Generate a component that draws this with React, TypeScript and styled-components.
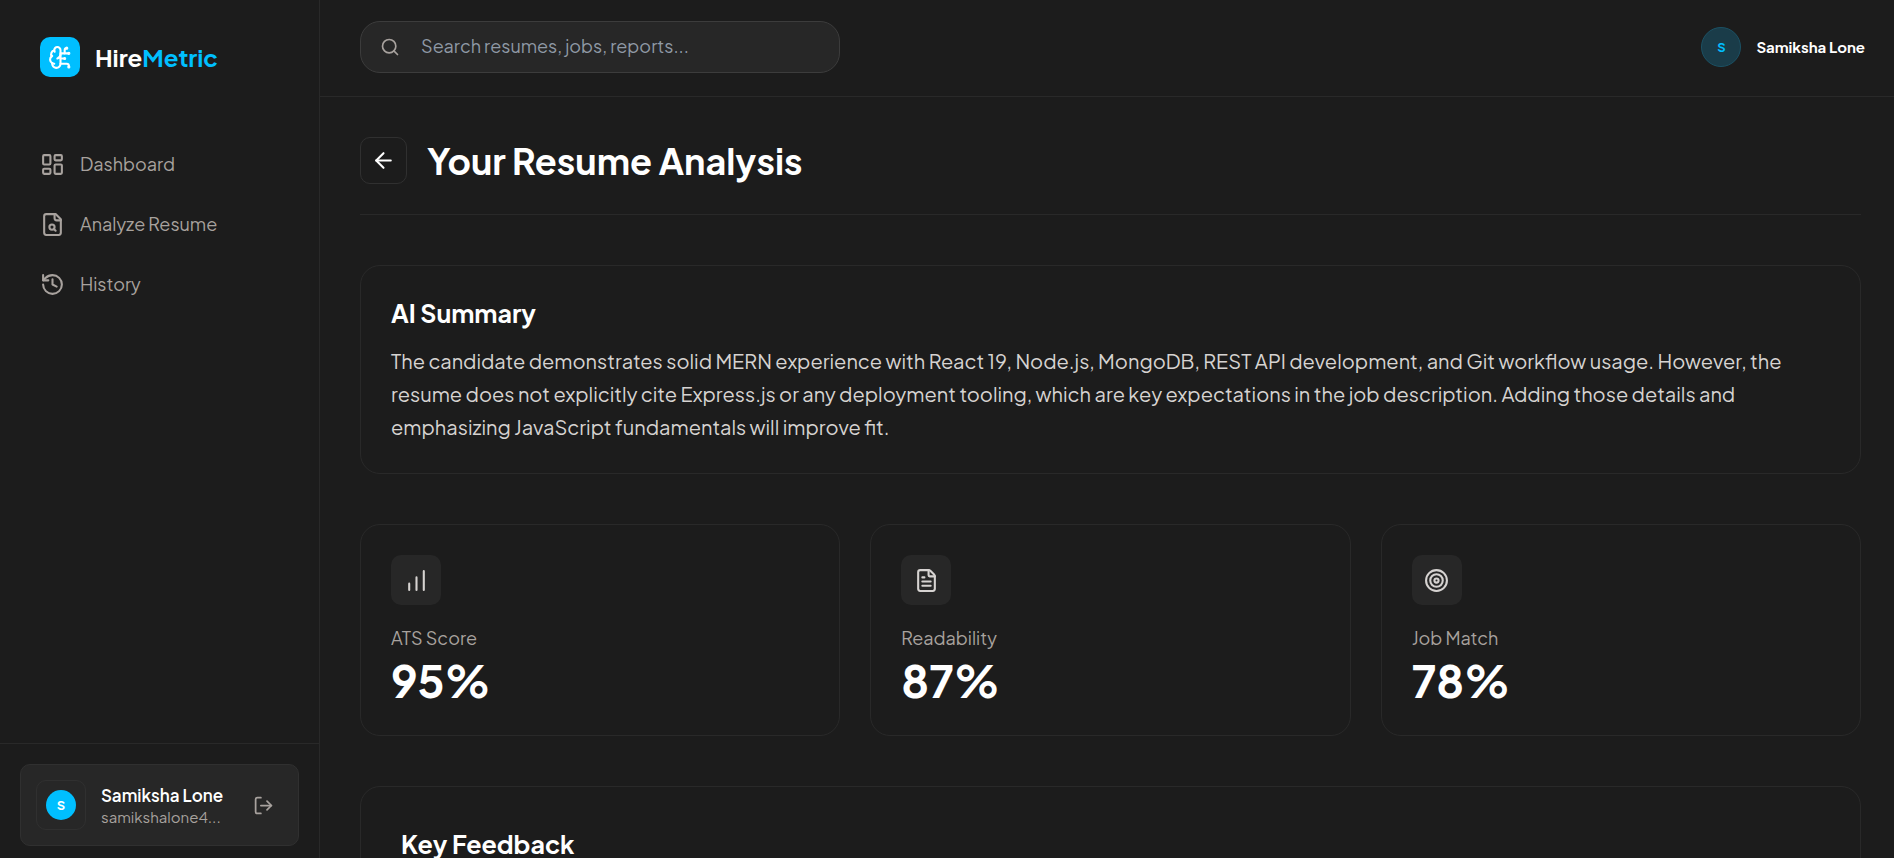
import React from "react";
import styled, { createGlobalStyle } from "styled-components";
import {
  ArrowLeft,
  BrainCircuit,
  FileText,
  History,
  LayoutDashboard,
  LogOut,
  Search,
  Target,
} from "lucide-react";

const color = {
  page: "#1c1c1c",
  raised: "#272727",
  line: "#292929",
  lineStrong: "#3c3c3c",
  accent: "#00bfff",
  white: "#ffffff",
  body: "#d6d3d1",
  muted: "#a8a29e",
};

const GlobalStyle = createGlobalStyle`
  *, *::before, *::after { box-sizing: border-box; }
  body {
    margin: 0;
    background: ${color.page};
    color: ${color.white};
    font-family: "Plus Jakarta Sans", Inter, "Liberation Sans", sans-serif;
    font-size: 16px;
  }
  h1, h2, p { margin: 0; }
  button, input { font: inherit; color: inherit; }
`;

const Shell = styled.div`
  display: grid;
  grid-template-columns: 320px minmax(0, 1fr);
  height: 100vh;
  overflow: hidden;
`;

const Sidebar = styled.aside`
  display: flex;
  flex-direction: column;
  border-right: 1px solid ${color.line};
`;

const Brand = styled.a`
  display: flex;
  align-items: center;
  gap: 15px;
  padding: 37px 40px 0;
  color: ${color.white};
  text-decoration: none;
  font-size: 24px;
  line-height: 40px;
  font-weight: 700;
`;

const BrandMark = styled.span`
  display: grid;
  place-items: center;
  width: 40px;
  height: 40px;
  border-radius: 10px;
  background: ${color.accent};
`;

const BrandAccent = styled.span`
  color: ${color.accent};
`;

const Nav = styled.nav`
  display: flex;
  flex-direction: column;
  gap: 10px;
  flex: 1;
  padding: 62px 20px 0;
`;

const NavLink = styled.a`
  display: flex;
  align-items: center;
  gap: 15px;
  height: 50px;
  padding: 0 20px;
  color: ${color.muted};
  text-decoration: none;
  font-size: 18px;
  line-height: 26px;
  font-weight: 400;
`;

const SidebarFooter = styled.div`
  padding: 20px 20px 12px;
  border-top: 1px solid ${color.line};
`;

const UserCard = styled.div`
  display: flex;
  align-items: center;
  gap: 15px;
  padding: 15px;
  border: 1px solid #303030;
  border-radius: 10px;
  background: ${color.raised};
`;

const UserBadge = styled.div`
  display: grid;
  place-items: center;
  flex: none;
  width: 50px;
  height: 50px;
  border: 1px solid #303030;
  border-radius: 10px;
`;

const Avatar = styled.span<{ $size: number; $soft?: boolean }>`
  display: grid;
  place-items: center;
  flex: none;
  width: ${(p) => p.$size}px;
  height: ${(p) => p.$size}px;
  border-radius: 50%;
  border: ${(p) => (p.$soft ? "1px solid #1b5164" : "0")};
  background: ${(p) => (p.$soft ? "#1a3c49" : color.accent)};
  color: ${(p) => (p.$soft ? color.accent : color.white)};
  font-size: 13px;
  line-height: 16px;
  font-weight: 700;
`;

const UserText = styled.div`
  flex: 1;
  min-width: 0;
`;

const UserName = styled.p`
  font-size: 17px;
  line-height: 24px;
  font-weight: 600;
  white-space: nowrap;
`;

const UserEmail = styled.p`
  font-size: 15px;
  line-height: 20px;
  color: ${color.muted};
`;

const LogoutButton = styled.button`
  display: grid;
  place-items: center;
  width: 40px;
  height: 40px;
  padding: 0;
  border: 0;
  background: none;
  color: ${color.muted};
  cursor: pointer;
`;

const Main = styled.div`
  display: flex;
  flex-direction: column;
  min-height: 0;
`;

const TopBar = styled.header`
  display: flex;
  align-items: center;
  justify-content: space-between;
  flex: none;
  padding: 21px 29px 23px 40px;
  border-bottom: 1px solid ${color.line};
`;

const SearchBox = styled.label`
  display: flex;
  align-items: center;
  gap: 21px;
  width: 480px;
  height: 52px;
  padding: 0 19px;
  border: 1px solid ${color.lineStrong};
  border-radius: 20px;
  background: ${color.raised};
  color: ${color.muted};
`;

const SearchInput = styled.input`
  flex: 1;
  min-width: 0;
  padding: 0 0 2px;
  border: 0;
  outline: 0;
  background: none;
  color: ${color.white};
  font-size: 18px;
  line-height: 26px;

  &::placeholder {
    color: #8f99a5;
    opacity: 1;
  }
`;

const Account = styled.div`
  display: flex;
  align-items: center;
  gap: 15px;
  font-size: 15px;
  line-height: 20px;
  font-weight: 700;
`;

const Content = styled.main`
  display: flex;
  flex-direction: column;
  flex: 1;
  gap: 50px;
  min-height: 0;
  padding: 40px 33px 40px 40px;
  overflow-y: auto;
  scrollbar-width: none;
`;

const PageHead = styled.div`
  display: flex;
  align-items: center;
  flex: none;
  gap: 20px;
  padding-bottom: 30px;
  border-bottom: 1px solid ${color.line};
`;

const BackButton = styled.button`
  display: grid;
  place-items: center;
  width: 47px;
  height: 47px;
  padding: 0;
  border: 1px solid #303030;
  border-radius: 10px;
  background: none;
  color: ${color.white};
  cursor: pointer;
`;

const PageTitle = styled.h1`
  font-size: 36px;
  line-height: 47px;
  font-weight: 700;
`;

const Card = styled.section<{ $pad: number }>`
  flex: none;
  padding: ${(p) => p.$pad}px;
  border: 1px solid ${color.line};
  border-radius: 20px;
`;

const CardTitle = styled.h2`
  font-size: 25px;
  line-height: 34px;
  font-weight: 700;
`;

const SummaryText = styled.p`
  margin-top: 14px;
  color: ${color.body};
  font-size: 20px;
  line-height: 33px;
`;

const Metrics = styled.div`
  display: grid;
  flex: none;
  grid-template-columns: repeat(3, minmax(0, 1fr));
  gap: 30px;
`;

const MetricIcon = styled.div`
  display: grid;
  place-items: center;
  width: 50px;
  height: 50px;
  border-radius: 10px;
  background: ${color.raised};
  color: ${color.body};
`;

const MetricLabel = styled.p`
  margin-top: 20px;
  color: ${color.muted};
  font-size: 18px;
  line-height: 25px;
`;

const MetricValue = styled.p`
  margin-top: 5px;
  font-size: 44px;
  line-height: 50px;
  font-weight: 700;
`;

const FileSearchIcon = () => (
  <svg width="25" height="25" viewBox="0 0 24 24" fill="none" stroke="currentColor" strokeWidth="2" strokeLinecap="round" strokeLinejoin="round" aria-hidden="true">
    <path d="M15 2H6a2 2 0 0 0-2 2v16a2 2 0 0 0 2 2h12a2 2 0 0 0 2-2V7Z" />
    <path d="M14 2v4a2 2 0 0 0 2 2h4" />
    <circle cx="11.5" cy="14.5" r="2.5" />
    <path d="M13.3 16.3 15 18" />
  </svg>
);

const BarsIcon = () => (
  <svg width="25" height="25" viewBox="0 0 24 24" fill="none" stroke="currentColor" strokeWidth="2" strokeLinecap="round" aria-hidden="true">
    <path d="M5 21v-6M12 21V9M19 21V3" />
  </svg>
);

const metrics = [
  { label: "ATS Score", value: "95%", icon: <BarsIcon /> },
  { label: "Readability", value: "87%", icon: <FileText size={25} /> },
  { label: "Job Match", value: "78%", icon: <Target size={25} /> },
];

export default function App() {
  return (
    <>
      <GlobalStyle />
      <Shell>
        <Sidebar>
          <Brand href="#">
            <BrandMark>
              <BrainCircuit size={25} />
            </BrandMark>
            <span>
              Hire<BrandAccent>Metric</BrandAccent>
            </span>
          </Brand>
          <Nav aria-label="Main">
            <NavLink href="#dashboard">
              <LayoutDashboard size={25} />
              Dashboard
            </NavLink>
            <NavLink href="#analyze">
              <FileSearchIcon />
              Analyze Resume
            </NavLink>
            <NavLink href="#history">
              <History size={25} />
              History
            </NavLink>
          </Nav>
          <SidebarFooter>
            <UserCard>
              <UserBadge>
                <Avatar $size={30}>S</Avatar>
              </UserBadge>
              <UserText>
                <UserName>Samiksha Lone</UserName>
                <UserEmail>samikshalone4...</UserEmail>
              </UserText>
              <LogoutButton type="button" aria-label="Log out">
                <LogOut size={21} />
              </LogoutButton>
            </UserCard>
          </SidebarFooter>
        </Sidebar>

        <Main>
          <TopBar>
            <SearchBox>
              <Search size={20} />
              <SearchInput type="search" aria-label="Search" placeholder="Search resumes, jobs, reports..." />
            </SearchBox>
            <Account>
              <Avatar $size={40} $soft>S</Avatar>
              Samiksha Lone
            </Account>
          </TopBar>

          <Content>
            <PageHead>
              <BackButton type="button" aria-label="Back">
                <ArrowLeft size={25} />
              </BackButton>
              <PageTitle>Your Resume Analysis</PageTitle>
            </PageHead>

            <Card $pad={30}>
              <CardTitle>AI Summary</CardTitle>
              <SummaryText>
                The candidate demonstrates solid MERN experience with React 19, Node.js, MongoDB, REST API
                development, and Git workflow usage. However, the resume does not explicitly cite Express.js or
                any deployment tooling, which are key expectations in the job description. Adding those details
                and emphasizing JavaScript fundamentals will improve fit.
              </SummaryText>
            </Card>

            <Metrics>
              {metrics.map((m) => (
                <Card key={m.label} $pad={30}>
                  <MetricIcon>{m.icon}</MetricIcon>
                  <MetricLabel>{m.label}</MetricLabel>
                  <MetricValue>{m.value}</MetricValue>
                </Card>
              ))}
            </Metrics>

            <Card $pad={40}>
              <CardTitle>Key Feedback</CardTitle>
            </Card>
          </Content>
        </Main>
      </Shell>
    </>
  );
}
